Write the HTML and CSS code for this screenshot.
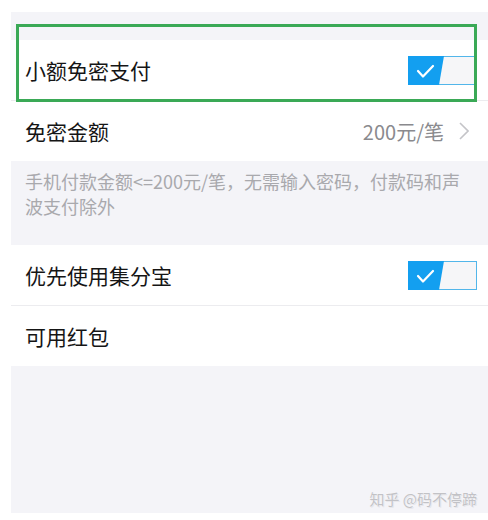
FILE: index.html
```html
<!DOCTYPE html>
<html>
<head>
<meta charset="utf-8">
<title>小额免密支付</title>
<link rel="stylesheet" href="styles.css">
</head>
<body>
<div class="screen">
  <div class="spacer-top"></div>

  <div class="group">
    <div class="row">
      <span class="label">小额免密支付</span>
      <svg class="toggle" width="69" height="29" viewBox="0 0 69 29">
        <rect x="0.5" y="0.5" width="68" height="28" fill="#f6f6f8" stroke="#52b6ea"/>
        <polygon points="0,0 36,0 31,29 0,29" fill="#139ff0"/>
        <polyline points="10,15 15,20.5 25,10" fill="none" stroke="#fff" stroke-width="2.2" stroke-linecap="round" stroke-linejoin="round"/>
      </svg>
    </div>
    <div class="row">
      <span class="label">免密金额</span>
      <span class="value">200元/笔</span>
      <svg class="chevron" width="10" height="18" viewBox="0 0 10 18">
        <polyline points="1,1 9,9 1,17" fill="none" stroke="#c4c4c8" stroke-width="1.6"/>
      </svg>
    </div>
  </div>

  <p class="note">手机付款金额&lt;=200元/笔，无需输入密码，付款码和声波支付除外</p>

  <div class="group">
    <div class="row">
      <span class="label">优先使用集分宝</span>
      <svg class="toggle" width="69" height="29" viewBox="0 0 69 29">
        <rect x="0.5" y="0.5" width="68" height="28" fill="#f6f6f8" stroke="#52b6ea"/>
        <polygon points="0,0 36,0 31,29 0,29" fill="#139ff0"/>
        <polyline points="10,15 15,20.5 25,10" fill="none" stroke="#fff" stroke-width="2.2" stroke-linecap="round" stroke-linejoin="round"/>
      </svg>
    </div>
    <div class="row">
      <span class="label">可用红包</span>
    </div>
  </div>

  <div class="footer">
    <span class="watermark">知乎 @码不停蹄</span>
  </div>

  <div class="highlight"></div>
</div>
</body>
</html>
```

FILE: styles.css
```css
body {
   margin: 0;
   background-color: white;
   font-family: "Noto Sans CJK SC", "Noto Sans", sans-serif;
}

.screen {
   position: relative;
   margin: 12px 0 0 11px;
   width: 477px;
   height: 501px;
   background-color: #f4f4f8;
   display: flex;
   flex-direction: column;
}

.spacer-top {
   height: 28px;
}

.group {
   background-color: white;
}

.row {
   height: 60px;
   display: flex;
   align-items: center;
   padding: 0 11px 0 14px;
   border-bottom: 1px solid #ececef;
}

.row:last-child {
   border-bottom: none;
}

.label {
   flex: 1;
   font-size: 21px;
   color: #151515;
}

.value {
   font-size: 20px;
   color: #8a8a8e;
}

.chevron {
   margin: 0 8px 0 15px;
}

.toggle {
   display: block;
}

.note {
   margin: 0;
   height: 84px;
   box-sizing: border-box;
   padding: 8px 18px 0 14px;
   font-size: 18px;
   line-height: 25px;
   color: #a9a9ad;
}

.footer {
   flex: 1;
   display: flex;
   justify-content: flex-end;
   align-items: flex-end;
   padding: 0 11px 4px 0;
}

.watermark {
   font-size: 15px;
   color: #c2c2c6;
   text-shadow: 0 0 1px #fff, 1px 1px 0 #e6e6ea;
}

/* green frame drawn over the first row */
.highlight {
   position: absolute;
   left: 5px;
   top: 12px;
   width: 455px;
   height: 72px;
   border: 3px solid #3aa956;
}
```
